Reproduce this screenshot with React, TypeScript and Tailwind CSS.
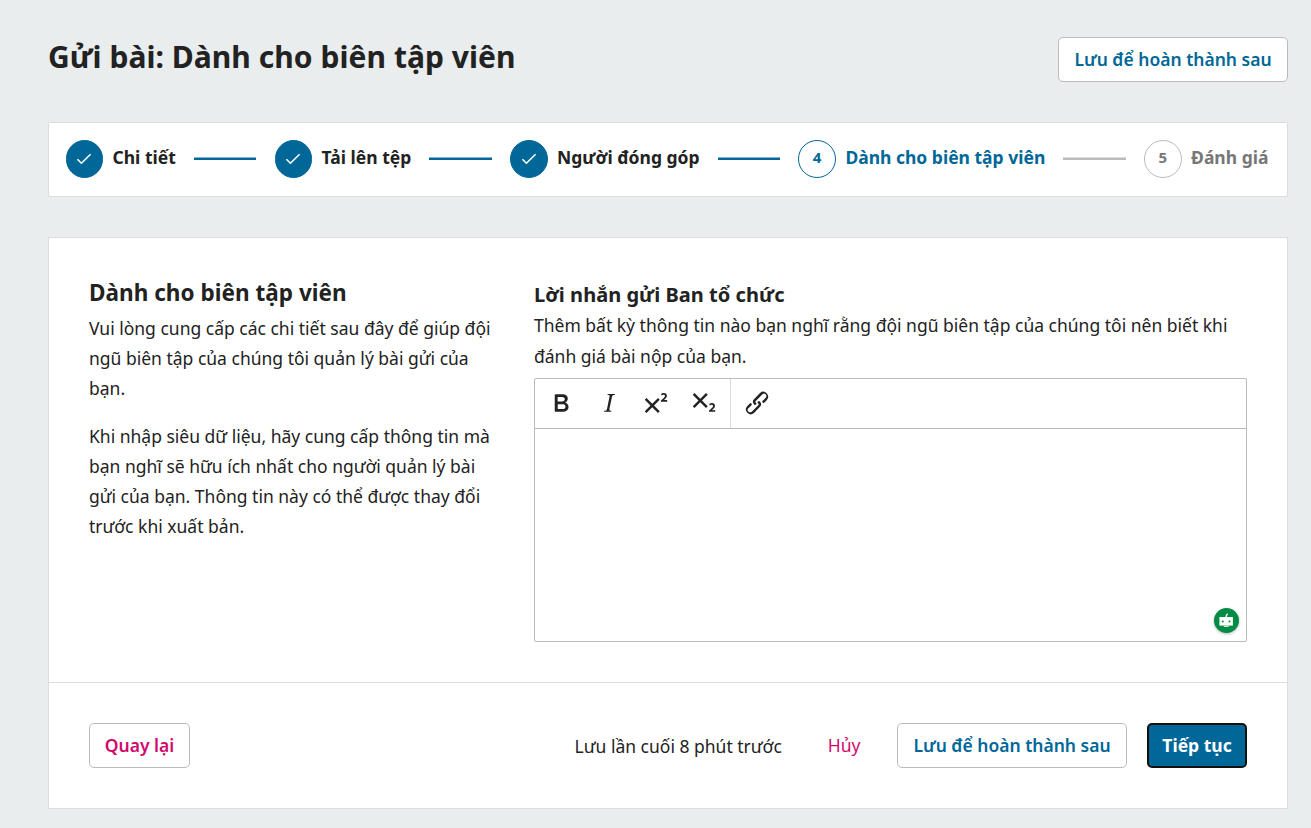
import type { ReactNode } from 'react'

type StepState = 'done' | 'current' | 'upcoming'

interface Step {
  label: string
  state: StepState
}

const STEPS: Step[] = [
  { label: 'Chi tiết', state: 'done' },
  { label: 'Tải lên tệp', state: 'done' },
  { label: 'Người đóng góp', state: 'done' },
  { label: 'Dành cho biên tập viên', state: 'current' },
  { label: 'Đánh giá', state: 'upcoming' }
]

const STEP_STYLE: Record<StepState, { marker: string; label: string }> = {
  done: { marker: 'bg-[#006798] border-[#006798] text-white', label: 'text-[#222]' },
  current: { marker: 'bg-white border-[#006798] text-[#006798]', label: 'text-[#006798]' },
  upcoming: { marker: 'bg-white border-[#bbb] text-[#777]', label: 'text-[#777]' }
}

const TOOLS = [
  {
    name: 'Bold',
    path: 'M7.8 19c-.3 0-.5 0-.6-.2l-.2-.5V5.7c0-.2 0-.4.2-.5l.6-.2h5c1.5 0 2.7.3 3.5 1 .7.6 1.1 1.4 1.1 2.5a3 3 0 0 1-.6 1.9c-.4.6-1 1-1.6 1.2.4.1.9.3 1.3.6s.8.7 1 1.2c.4.4.5 1 .5 1.6 0 1.3-.4 2.3-1.3 3-.8.7-2.1 1-3.8 1H7.8Zm5-8.3c.6 0 1.2-.1 1.6-.5.4-.3.6-.7.6-1.3 0-1.1-.8-1.7-2.3-1.7H9.3v3.5h3.4Zm.5 6c.7 0 1.3-.1 1.7-.4.4-.4.6-.9.6-1.5s-.2-1-.7-1.4c-.4-.3-1-.4-2-.4H9.4v3.8h4Z'
  },
  {
    name: 'Italic',
    path: 'm16.7 4.7-.1.9h-.3c-.6 0-1 0-1.4.3-.3.3-.4.6-.5 1.1l-2.1 9.8v.6c0 .5.4.8 1.4.8h.2l-.2.8H8l.2-.8h.2c1.1 0 1.8-.5 2-1.5l2-9.8.1-.5c0-.6-.4-.8-1.4-.8h-.3l.2-.9h5.8Z'
  },
  {
    name: 'Superscript',
    path: 'M15 9.4 10.4 14l4.6 4.6-1.4 1.4L9 15.4 4.4 20 3 18.6 7.6 14 3 9.4 4.4 8 9 12.6 13.6 8 15 9.4Zm5.9 1.6h-5v-1l1-.8 1.7-1.6c.3-.5.5-.9.5-1.3 0-.3 0-.5-.2-.7-.2-.2-.5-.3-.9-.3l-.8.2-.7.4-.4-1.2c.2-.2.5-.4 1-.5.3-.2.8-.2 1.2-.2.8 0 1.4.2 1.8.6.4.4.6 1 .6 1.6 0 .5-.2 1-.5 1.5l-1.3 1.4-.6.5h2.6V11Z'
  },
  {
    name: 'Subscript',
    path: 'm10.4 10 4.6 4.6-1.4 1.4L9 11.4 4.4 16 3 14.6 7.6 10 3 5.4 4.4 4 9 8.6 13.6 4 15 5.4 10.4 10ZM21 19h-5v-1l1-.8 1.7-1.6c.3-.4.5-.8.5-1.2 0-.3 0-.6-.2-.7-.2-.2-.5-.3-.9-.3a2 2 0 0 0-.8.2l-.7.3-.4-1.1 1-.6 1.2-.2c.8 0 1.4.3 1.8.7.4.4.6.9.6 1.5s-.2 1.1-.5 1.6a8 8 0 0 1-1.3 1.3l-.6.6h2.6V19Z'
  }
]

const LINK_PATH =
  'M6.2 12.3a1 1 0 0 1 1.4 1.4l-2 2a2 2 0 1 0 2.6 2.8l4.8-4.8a1 1 0 0 0 0-1.4 1 1 0 1 1 1.4-1.3 2.9 2.9 0 0 1 0 4L9.6 20a3.9 3.9 0 0 1-5.5-5.5l2-2Zm11.6-.6a1 1 0 0 1-1.4-1.4l2-2a2 2 0 1 0-2.6-2.8L11 10.3a1 1 0 0 0 0 1.4A1 1 0 1 1 9.6 13a2.9 2.9 0 0 1 0-4L14.4 4a3.9 3.9 0 0 1 5.5 5.5l-2 2Z'

function ToolButton({ name, path }: { name: string; path: string }) {
  return (
    <button type="button" aria-label={name} className="flex h-12 w-[47.7px] items-center justify-center">
      <svg viewBox="0 0 24 24" className="size-[30px] fill-[#222]">
        <path fillRule="evenodd" d={path} />
      </svg>
    </button>
  )
}

function Button({ className, children }: { className: string; children: ReactNode }) {
  return (
    <button
      type="button"
      className={`flex h-[45px] shrink-0 items-center justify-center rounded-[5px] whitespace-nowrap ${className}`}
    >
      {children}
    </button>
  )
}

function StepItem({ step, index }: { step: Step; index: number }) {
  const style = STEP_STYLE[step.state]
  return (
    <li className="flex items-center gap-[9.5px]">
      <span
        className={`flex h-[38px] w-[37.5px] shrink-0 items-center justify-center rounded-full border pb-[3px] text-[15px] font-bold ${style.marker}`}
      >
        {step.state === 'done' ? (
          <svg viewBox="0 0 16 12" className="mt-[3px] h-3 w-4 fill-none stroke-white stroke-[1.6]">
            <path d="M1.4 6.2 5.4 10.2 14.6 1.2" />
          </svg>
        ) : (
          index + 1
        )}
      </span>
      <span className={`pb-[3px] text-[17.5px] leading-[25px] font-bold whitespace-nowrap ${style.label}`}>
        {step.label}
      </span>
    </li>
  )
}

function Stepper() {
  return (
    <ol className="mt-10 flex h-[75px] items-center justify-between rounded-[2px] border border-[#ddd] bg-white pr-[18.5px] pb-px pl-[16.5px]">
      {STEPS.map((step, i) => (
        <div key={step.label} className="contents">
          {i > 0 && (
            <li
              aria-hidden
              className={`mb-px h-[3px] w-[62.5px] border-t ${
                step.state === 'upcoming' ? 'border-[#ddd] bg-[#bbb]' : 'border-[#80b3cb] bg-[#006798]'
              }`}
            />
          )}
          <StepItem step={step} index={i} />
        </div>
      ))}
    </ol>
  )
}

function Editor() {
  return (
    <div className="mt-[6px] flex h-[264px] flex-col rounded-[2px] border border-[#bbb]">
      <div className="flex h-[50px] border-b border-[#bbb]">
        <div className="flex w-[196px] border-r border-[#ddd] pl-[2px]">
          {TOOLS.map((tool) => (
            <ToolButton key={tool.name} {...tool} />
          ))}
        </div>
        <div className="pl-[2px]">
          <ToolButton name="Link" path={LINK_PATH} />
        </div>
      </div>
      <div className="flex flex-1 items-end justify-end pr-[7px] pb-2">
        <span className="flex size-[25px] items-center justify-center rounded-full bg-[#018c46] shadow-[0_1px_3px_rgba(0,0,0,0.3)]">
          <svg viewBox="0 0 25 25" className="size-[25px]">
            <path d="M12.2 9V8l1.4-2.4" fill="none" stroke="#fff" strokeWidth="1.3" />
            <path d="M5.4 9h13.5v8.6H5.4z" fill="#fff" />
            <path d="M9.8 18.3h5" stroke="#fff" strokeWidth="1" />
            <circle cx="8.8" cy="13.5" r="1" fill="#018c46" />
            <circle cx="15.5" cy="13.5" r="1" fill="#018c46" />
          </svg>
        </span>
      </div>
    </div>
  )
}

export default function App() {
  return (
    <div className="h-[828px] overflow-hidden bg-[#e9eded] pt-[37px] pr-[23px] pl-12 font-['Noto_Sans',sans-serif] text-[17.5px] text-[#222]">
      <header className="flex h-[45px] items-start justify-between">
        <h1 className="text-[30px] leading-[40px] font-bold tracking-[0.05px]">Gửi bài: Dành cho biên tập viên</h1>
        <Button className="w-[230px] border border-[#bbb] bg-white font-semibold text-[#006798]">
          Lưu để hoàn thành sau
        </Button>
      </header>

      <Stepper />

      <main className="mt-10 border border-[#ddd] bg-white">
        <section className="flex h-[444px] pt-10 pr-10 pl-10">
          <div className="w-[405px] shrink-0">
            <h2 className="text-[22.5px] leading-[30px] font-bold tracking-[0.03px]">Dành cho biên tập viên</h2>
            <div className="mt-[5px] space-y-[18px] leading-[30px]">
              <p>Vui lòng cung cấp các chi tiết sau đây để giúp đội ngũ biên tập của chúng tôi quản lý bài gửi của bạn.</p>
              <p>
                Khi nhập siêu dữ liệu, hãy cung cấp thông tin mà bạn nghĩ sẽ hữu ích nhất cho người quản lý bài gửi của
                bạn. Thông tin này có thể được thay đổi trước khi xuất bản.
              </p>
            </div>
          </div>
          <div className="ml-10 min-w-0 flex-1">
            <h3 className="mt-[2px] text-[20px] leading-[30px] font-bold tracking-[0.03px]">Lời nhắn gửi Ban tổ chức</h3>
            <p className="leading-[31px]">
              Thêm bất kỳ thông tin nào bạn nghĩ rằng đội ngũ biên tập của chúng tôi nên biết khi đánh giá bài nộp của
              bạn.
            </p>
            <Editor />
          </div>
        </section>

        <footer className="flex h-[126px] items-center border-t border-[#ddd] px-10">
          <Button className="w-[101px] border border-[#bbb] bg-white font-semibold text-[#d00a6c]">Quay lại</Button>
          <span className="ml-auto pt-[2px]">Lưu lần cuối 8 phút trước</span>
          <Button className="mr-[36.5px] ml-[46px] text-[#d00a6c]">Hủy</Button>
          <Button className="w-[230px] border border-[#bbb] bg-white font-semibold text-[#006798]">
            Lưu để hoàn thành sau
          </Button>
          <Button className="ml-5 w-[100px] border-2 border-[#101010] bg-[#006798] font-bold text-white">Tiếp tục</Button>
        </footer>
      </main>
    </div>
  )
}
